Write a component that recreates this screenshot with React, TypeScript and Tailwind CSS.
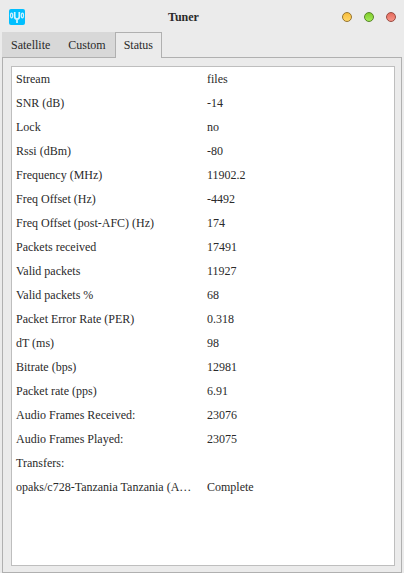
import { useState } from "react";

type Row = { name: string; value: string };

const rows: Row[] = [
  { name: "Stream", value: "files" },
  { name: "SNR (dB)", value: "-14" },
  { name: "Lock", value: "no" },
  { name: "Rssi (dBm)", value: "-80" },
  { name: "Frequency (MHz)", value: "11902.2" },
  { name: "Freq Offset (Hz)", value: "-4492" },
  { name: "Freq Offset (post-AFC) (Hz)", value: "174" },
  { name: "Packets received", value: "17491" },
  { name: "Valid packets", value: "11927" },
  { name: "Valid packets %", value: "68" },
  { name: "Packet Error Rate (PER)", value: "0.318" },
  { name: "dT (ms)", value: "98" },
  { name: "Bitrate (bps)", value: "12981" },
  { name: "Packet rate (pps)", value: "6.91" },
  { name: "Audio Frames Received:", value: "23076" },
  { name: "Audio Frames Played:", value: "23075" },
  { name: "Transfers:", value: "" },
  { name: "opaks/c728-Tanzania Tanzania (A…", value: "Complete" },
];

const tabs = ["Satellite", "Custom", "Status"];

function AppIcon() {
  return (
    <svg viewBox="0 0 16 16" className="size-4" fill="none" aria-hidden="true">
      <rect width="16" height="16" rx="2" fill="#00bfff" />
      <path d="M5.7 3v4.8a2.3 2.3 0 0 0 4.6 0V3M8 10v4" stroke="#d5f4ff" strokeWidth="1.7" />
      <ellipse cx="2.6" cy="6.5" rx="1.1" ry="2.4" stroke="#d0f2ff" strokeWidth="1.2" />
      <ellipse cx="13.4" cy="6.5" rx="1.1" ry="2.4" stroke="#d0f2ff" strokeWidth="1.2" />
    </svg>
  );
}

function TitleBar() {
  return (
    <header className="flex h-8 items-center pr-2 pl-[9px] pt-px">
      <AppIcon />
      <h1 className="flex-1 text-center font-bold">Tuner</h1>
      <div className="flex gap-3">
        <button
          aria-label="Minimize"
          className="size-[10px] rounded-full border border-[#96742f] bg-linear-to-b from-[#f8bd3a] to-[#ffd768]"
        />
        <button
          aria-label="Maximize"
          className="size-[10px] rounded-full border border-[#568428] bg-linear-to-b from-[#80cc28] to-[#a4ec58]"
        />
        <button
          aria-label="Close"
          className="size-[10px] rounded-full border border-[#984a41] bg-linear-to-b from-[#e56a5c] to-[#f69588]"
        />
      </div>
    </header>
  );
}

export default function App() {
  const [active, setActive] = useState("Status");

  return (
    <div className="flex min-h-screen flex-col bg-[#ebebeb] font-['Liberation_Serif',serif] text-[12px] leading-4 text-[#2a2a2a]">
      <TitleBar />
      <main className="flex flex-1 flex-col px-0.5">
        <div role="tablist" className="relative z-10 -mb-px flex h-[26px]">
          {tabs.map((tab) => (
            <button
              key={tab}
              role="tab"
              aria-selected={tab === active}
              onClick={() => setActive(tab)}
              className={
                tab === active
                  ? "border border-b-0 border-[#b0b0b0] bg-[#ebebeb] px-2 pb-0.5"
                  : "border-b border-[#b0b0b0] bg-[#d8d8d8] px-[9px]"
              }
            >
              {tab}
            </button>
          ))}
        </div>
        <section role="tabpanel" aria-label={active} className="flex flex-1 flex-col border border-[#b0b0b0] pt-2 pr-[6px] pb-[6px] pl-2">
          <div className="flex-1 border border-[#bebebe] bg-white">
            <table className="w-full table-fixed border-collapse">
              <colgroup>
                <col className="w-[191px]" />
                <col />
              </colgroup>
              <tbody>
                {rows.map((row) => (
                  <tr key={row.name} className="h-6">
                    <th scope="row" className="truncate px-1 text-left font-normal">
                      {row.name}
                    </th>
                    <td className="truncate px-1">{row.value}</td>
                  </tr>
                ))}
              </tbody>
            </table>
          </div>
        </section>
      </main>
    </div>
  );
}
